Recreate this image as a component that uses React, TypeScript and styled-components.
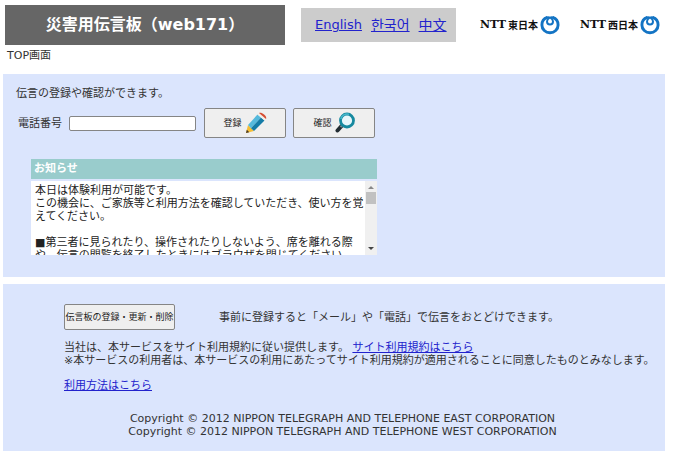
import React from "react";
import styled, { createGlobalStyle } from "styled-components";

const GlobalStyle = createGlobalStyle`
  * { box-sizing: border-box; }
  body {
    margin: 0;
    background: #fff;
    color: #333;
    font-family: "DejaVu Sans", "Noto Sans CJK JP", sans-serif;
    font-size: 11px;
    line-height: 13px;
  }
  p, h1, h2 { margin: 0; }
`;

const Page = styled.div`
  display: flex;
  flex-direction: column;
  padding: 5px 15px 12px 3px;
`;

const Header = styled.header`
  display: flex;
  align-items: center;
  padding: 0 5px 0 2px;
`;

const Title = styled.h1`
  flex: 0 1 280px;
  padding: 8px 0;
  background: #666;
  color: #fff;
  font-size: 16px;
  line-height: 24px;
  text-align: center;
  white-space: nowrap;
`;

const Languages = styled.nav`
  display: flex;
  gap: 9px;
  margin-left: 16px;
  padding: 6px 9px 6px 14px;
  background: #ccc;
  line-height: 22px;
`;

const Link = styled.a<{ $size?: number }>`
  color: #2222cc;
  font-size: ${(p) => p.$size ?? 11}px;
  text-decoration: underline;
  white-space: nowrap;
`;

const Logos = styled.div`
  display: flex;
  flex: 1;
  justify-content: flex-end;
  gap: 20px;
`;

const Logo = styled.div`
  display: flex;
  align-items: center;
  gap: 2px;
  color: #111;
  white-space: nowrap;
`;

const LogoLatin = styled.span`
  font: 900 11px/20px "DejaVu Serif", serif;
`;

const LogoRegion = styled.span`
  font: bold 10px/20px "Noto Sans CJK JP", sans-serif;
`;

const Breadcrumb = styled.div`
  padding: 4px 4px 12px;
`;

const Panels = styled.main`
  display: flex;
  flex-direction: column;
  gap: 7px;
`;

const Panel = styled.section<{ $pad: string }>`
  padding: ${(p) => p.$pad};
  background: #dbe5fd;
`;

const PhoneForm = styled.form`
  display: flex;
  align-items: center;
  margin: 8px 0 21px 2px;
`;

const PhoneInput = styled.input`
  width: 127px;
  height: 15px;
  margin: 0 8px 0 7px;
  padding: 0 3px;
  border: 1px solid #858585;
  border-radius: 2px;
  background: #fff;
  font: inherit;
`;

const Button = styled.button<{ $wide?: boolean }>`
  display: inline-flex;
  align-items: center;
  justify-content: center;
  gap: 3px;
  width: ${(p) => (p.$wide ? 111 : 82)}px;
  height: ${(p) => (p.$wide ? 26 : 30)}px;
  margin-right: 7px;
  padding: 0;
  border: 1px solid #858585;
  border-radius: 2px;
  background: #efefef;
  color: #222;
  font-family: inherit;
  font-size: 9px;
  line-height: 12px;
  white-space: nowrap;
`;

const Notice = styled.section`
  max-width: 346px;
  margin-left: 15px;
`;

const NoticeTitle = styled.h2`
  margin-bottom: 2px;
  padding: 3px 3px 4px;
  background: #99cccc;
  color: #fff;
  font-size: 11px;
  line-height: 13px;
`;

const NoticeBox = styled.div`
  display: flex;
  height: 74px;
  background: #fff;
`;

const NoticeText = styled.div`
  flex: 1;
  padding: 3px 0 0 4px;
  overflow-y: auto;
  scrollbar-width: none;
  color: #222;

  p + p { margin-top: 13px; }
`;

const ScrollTrack = styled.div`
  display: flex;
  flex-direction: column;
  align-items: center;
  justify-content: space-between;
  width: 12px;
  padding: 3px 0;
  background: #f0f0f0;
`;

const ScrollTop = styled.div`
  display: flex;
  flex-direction: column;
  align-items: center;
  gap: 2px;
`;

const ScrollThumb = styled.div`
  width: 10px;
  height: 12px;
  background: #c1c1c1;
`;

const RegisterRow = styled.div`
  display: flex;
  align-items: center;
  gap: 37px;
  margin-bottom: 11px;
`;

const Terms = styled.div`
  margin-bottom: 12px;
`;

const Footer = styled.footer`
  margin: 20px 44px 0 0;
  text-align: center;
`;

const Mark = () => (
  <svg width="20" height="20" viewBox="0 0 20 20" fill="none" stroke="#1474c4" aria-hidden="true">
    <path
      d="M7.300 2.300C4 3.300 1.900 6.300 1.900 10C1.900 14.400 5.500 17.800 10 17.800C14.500 17.800 18.100 14.400 18.100 10C18.100 6.300 16 3.300 12.700 2.300"
      strokeWidth="2.900"
    />
    <path
      d="M6.500 2.500C9 1.500 13 3.500 13 6.500C13 8.300 11.700 9.500 10 9.500C8.300 9.500 7 8.300 7 6.500C7 3.500 11 1.500 13.500 2.500"
      strokeWidth="2"
    />
  </svg>
);

const Pencil = () => (
  <svg width="22" height="22" viewBox="0 0 22 22" aria-hidden="true">
    <path d="M1 21L3 13L9 19Z" fill="#f5bd35" />
    <path d="M1 21L1.800 17.800L4.300 20.200Z" fill="#493a25" />
    <path d="M3 13L12.500 2.500L16 5.500L6 16.200Z" fill="#55b9dc" />
    <path d="M6 16.200L16 5.500L19.500 8.500L9 19Z" fill="#147ca7" />
    <path d="M12.500 2.500L14 1L21 7L19.500 8.500Z" fill="#f2eee7" />
    <path d="M14 1C16 -0.500 22.500 3.500 21 7Z" fill="#d64d31" />
  </svg>
);

const Magnifier = () => (
  <svg width="20" height="22" viewBox="0 0 20 22" aria-hidden="true">
    <path d="M6.500 14L2.500 18.500" stroke="#222c32" strokeWidth="4" strokeLinecap="round" />
    <path d="M7.500 13L5.500 15" stroke="#788c94" strokeWidth="2" />
    <circle cx="12" cy="8.500" r="6.500" fill="#e7f6fb" stroke="#16899f" strokeWidth="2.800" />
    <path d="M5.800 7A6.300 6.300 0 0 1 14 2.400" fill="none" stroke="#48b8cd" strokeWidth="1.500" />
  </svg>
);

const NttLogo = ({ region }: { region: string }) => (
  <Logo>
    <LogoLatin>NTT</LogoLatin>
    <LogoRegion>{region}</LogoRegion>
    <Mark />
  </Logo>
);

export default function App() {
  return (
    <>
      <GlobalStyle />
      <Page lang="ja">
        <Header>
          <Title>災害用伝言板（web171）</Title>
          <Languages>
            <Link href="#en" $size={13}>English</Link>
            <Link href="#ko" lang="ko" $size={14}>한국어</Link>
            <Link href="#zh" lang="zh" $size={14}>中文</Link>
          </Languages>
          <Logos>
            <NttLogo region="東日本" />
            <NttLogo region="西日本" />
          </Logos>
        </Header>
        <Breadcrumb>TOP画面</Breadcrumb>
        <Panels>
          <Panel $pad="13px 13px 22px">
            <p>伝言の登録や確認ができます。</p>
            <PhoneForm onSubmit={(e) => e.preventDefault()}>
              <label htmlFor="phone">電話番号</label>
              <PhoneInput id="phone" type="tel" />
              <Button type="submit">登録<Pencil /></Button>
              <Button type="button">確認<Magnifier /></Button>
            </PhoneForm>
            <Notice>
              <NoticeTitle>お知らせ</NoticeTitle>
              <NoticeBox>
                <NoticeText tabIndex={0}>
                  <p>
                    本日は体験利用が可能です。
                    <br />
                    この機会に、ご家族等と利用方法を確認していただき、使い方を覚えてください。
                  </p>
                  <p>
                    ■第三者に見られたり、操作されたりしないよう、席を離れる際や、伝言の閲覧を終了したときにはブラウザを閉じてください。
                  </p>
                </NoticeText>
                <ScrollTrack aria-hidden="true">
                  <ScrollTop>
                    <svg width="6" height="6" viewBox="0 0 6 6"><path d="M0 5L3 2L6 5Z" fill="#888" /></svg>
                    <ScrollThumb />
                  </ScrollTop>
                  <svg width="6" height="6" viewBox="0 0 6 6"><path d="M0 1H6L3 4Z" fill="#444" /></svg>
                </ScrollTrack>
              </NoticeBox>
            </Notice>
          </Panel>
          <Panel $pad="20px 0 13px 61px">
            <RegisterRow>
              <Button type="button" $wide>伝言板の登録・更新・削除</Button>
              <p>事前に登録すると「メール」や「電話」で伝言をおとどけできます。</p>
            </RegisterRow>
            <Terms>
              <p>
                当社は、本サービスをサイト利用規約に従い提供します。 <Link href="#terms">サイト利用規約はこちら</Link>
              </p>
              <p>※本サービスの利用者は、本サービスの利用にあたってサイト利用規約が適用されることに同意したものとみなします。</p>
            </Terms>
            <Link href="#usage">利用方法はこちら</Link>
            <Footer>
              <p>Copyright © 2012 NIPPON TELEGRAPH AND TELEPHONE EAST CORPORATION</p>
              <p>Copyright © 2012 NIPPON TELEGRAPH AND TELEPHONE WEST CORPORATION</p>
            </Footer>
          </Panel>
        </Panels>
      </Page>
    </>
  );
}
